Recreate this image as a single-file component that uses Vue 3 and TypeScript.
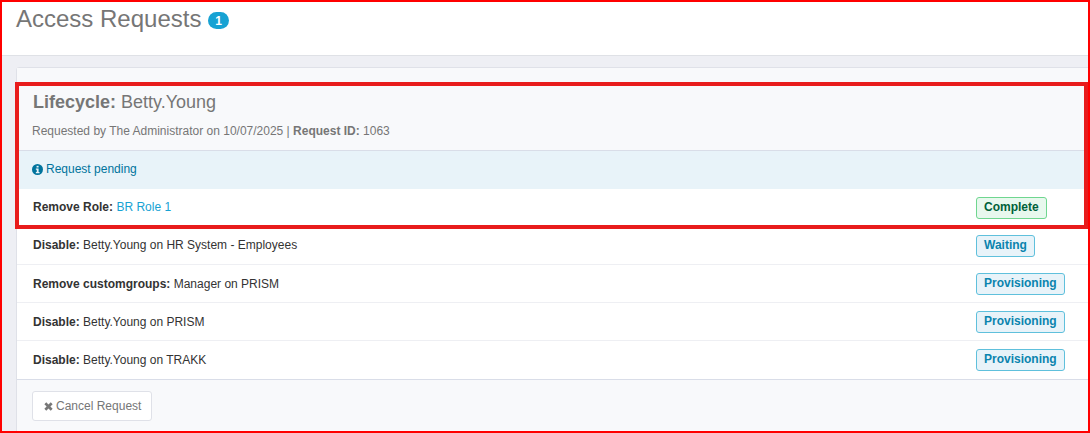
<template>
  <div class="page">
    <header class="page-head">
      <h1>Access Requests <span class="count">1</span></h1>
    </header>

    <main class="content">
      <section class="panel">
        <div class="panel-head">
          <h2><b>Lifecycle:</b> Betty.Young</h2>
          <p>Requested by The Administrator on 10/07/2025 | <b>Request ID:</b> 1063</p>
        </div>

        <div class="alert">
          <svg class="info" viewBox="0 0 12 12" width="11" height="11">
            <circle cx="6" cy="6" r="6" fill="#00739d" />
            <rect x="5" y="2" width="2.2" height="1.8" fill="#e8f3f9" />
            <path d="M4.2 4.8h3v4h1v1.4H4.2V8.8h1V6.2h-1z" fill="#e8f3f9" />
          </svg>
          Request pending
        </div>

        <ul class="rows">
          <li v-for="row in rows" :key="row.label + row.text">
            <span>
              <b>{{ row.label }}:</b>{{ ' ' }}<a v-if="row.link" class="link">{{ row.text }}</a><template v-else>{{ row.text }}</template>
            </span>
            <em class="status" :class="row.status.toLowerCase()">{{ row.status }}</em>
          </li>
        </ul>

        <div class="panel-foot">
          <button type="button">
            <svg viewBox="0 0 10 10" width="9" height="9">
              <path d="M2.5.4 5 2.9 7.5.4l2.1 2.1L7.1 5l2.5 2.5-2.1 2.1L5 7.1 2.5 9.6.4 7.5 2.9 5 .4 2.5z" fill="#777" />
            </svg>
            Cancel Request
          </button>
        </div>
      </section>
    </main>

    <div class="mark"></div>
    <div class="frame"></div>
  </div>
</template>

<script setup lang="ts">
interface Row {
  label: string
  text: string
  status: string
  link?: boolean
}

const rows: Row[] = [
  { label: 'Remove Role', text: 'BR Role 1', status: 'Complete', link: true },
  { label: 'Disable', text: 'Betty.Young on HR System - Employees', status: 'Waiting' },
  { label: 'Remove customgroups', text: 'Manager on PRISM', status: 'Provisioning' },
  { label: 'Disable', text: 'Betty.Young on PRISM', status: 'Provisioning' },
  { label: 'Disable', text: 'Betty.Young on TRAKK', status: 'Provisioning' }
]
</script>

<style>
html,
body {
  margin: 0;
  overflow: hidden;
}
</style>

<style scoped>
.page {
  position: relative;
  width: 1090px;
  height: 433px;
  overflow: hidden;
  background: #eeeff4;
  font-family: 'Liberation Sans', Arial, sans-serif;
  font-size: 12px;
  color: #333;
}

.page-head {
  height: 56px;
  padding: 2px 16px 0;
  box-sizing: border-box;
  background: #fff;
  border-bottom: 1px solid #dfe1e6;
}

h1 {
  margin: 0;
  font-size: 24px;
  font-weight: 400;
  line-height: 33px;
  color: #767676;
}

.count {
  display: inline-block;
  min-width: 21px;
  height: 17px;
  box-sizing: border-box;
  padding-top: 1px;
  border-radius: 9px;
  background: #17a2d3;
  color: #fff;
  font-size: 12px;
  font-weight: 700;
  line-height: 16px;
  text-align: center;
  vertical-align: 2px;
}

.content {
  padding: 11px 0 0 16px;
}

.panel {
  width: 1072px;
  background: #fff;
  border: 1px solid #dfe1e8;
  border-radius: 3px 0 0 3px;
}

.panel-head {
  height: 83px;
  box-sizing: border-box;
  padding: 23px 15px 0;
  background: #f8f9fb;
  border-bottom: 1px solid #d9dde8;
}

h2 {
  margin: 0 0 0 1px;
  font-size: 18px;
  font-weight: 400;
  line-height: 22px;
  color: #767676;
}

.panel-head p {
  margin: 10px 0 0;
  line-height: 16px;
  color: #767676;
}

.alert {
  display: flex;
  align-items: center;
  gap: 3px;
  height: 36px;
  padding-bottom: 2px;
  padding-left: 15px;
  background: #e8f3f9;
  color: #00739d;
}

.rows {
  margin: 0;
  padding: 0;
  list-style: none;
}

.rows li {
  display: grid;
  grid-template-columns: 1fr 113px;
  align-items: center;
  height: 37px;
  padding-left: 16px;
  border-top: 1px solid #eeeff3;
}

.rows li:first-child {
  border-top: 0;
}

.rows li:nth-child(-n + 2) span {
  margin-bottom: 2px;
}

.rows li:last-child {
  padding-bottom: 1px;
}

.link {
  color: #17a2d3;
}

.status {
  justify-self: start;
  height: 22px;
  box-sizing: border-box;
  padding: 0 7px;
  border: 1px solid #5fc0dc;
  border-radius: 3px;
  background: #e8f3f9;
  color: #0b84ae;
  font-size: 12px;
  font-style: normal;
  font-weight: 700;
  line-height: 19px;
}

.status.complete {
  border-color: #6fd68f;
  background: #e8f8ee;
  color: #00613a;
}

.panel-foot {
  height: 60px;
  box-sizing: border-box;
  padding-top: 11px;
  padding-left: 15px;
  background: #f8f9fb;
  border-top: 1px solid #d9dde8;
}

.panel-foot button {
  display: inline-flex;
  align-items: center;
  gap: 3px;
  height: 30px;
  padding: 0 10px 0 11px;
  background: #fff;
  border: 1px solid #dfe1e8;
  border-radius: 3px;
  color: #767676;
  font: inherit;
}

.mark {
  position: absolute;
  left: 15px;
  top: 82px;
  width: 1073px;
  height: 147px;
  box-sizing: border-box;
  border: 4px solid #e81c1c;
}

.frame {
  position: absolute;
  inset: 0;
  border: 2px solid #f00;
  pointer-events: none;
}
</style>
